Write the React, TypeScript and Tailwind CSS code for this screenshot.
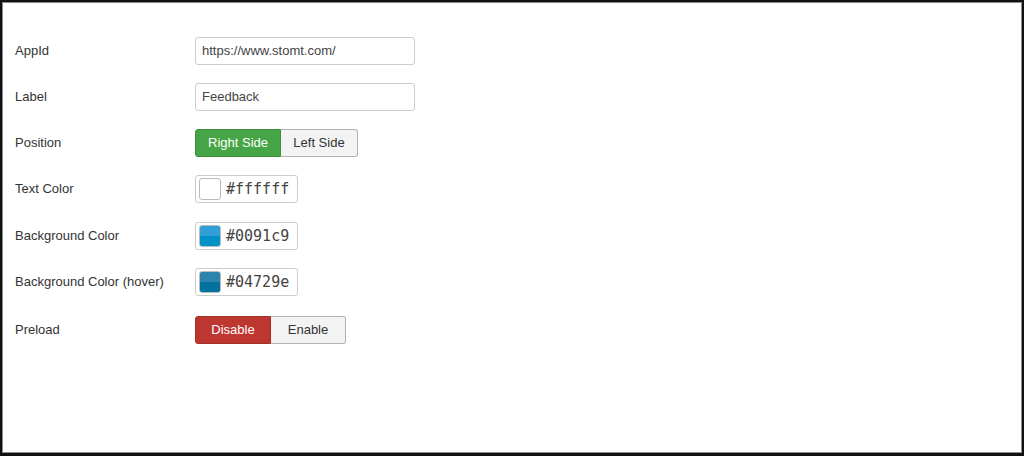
import React from "react";

const sans = { fontFamily: '"Liberation Sans", Arial, sans-serif' };

const Row = ({ label, className = "", children }: { label: string; className?: string; children: React.ReactNode }) => (
  <div className={`flex h-[28px] items-center ${className}`}>
    <div className="w-[180px] text-[13px] text-[#333]">{label}</div>
    <div className="flex">{children}</div>
  </div>
);

const TextInput = ({ value }: { value: string }) => (
  <div className="flex h-[28px] w-[220px] items-center rounded-[3px] border border-[#ccc] bg-white px-[6px] text-[13px] text-[#444]">
    {value}
  </div>
);

const ColorInput = ({ value, top, bottom }: { value: string; top: string; bottom: string }) => (
  <div className="flex h-[28px] w-[103px] items-center gap-[5px] rounded-[3px] border border-[#ccc] bg-white pl-[3px]">
    <div
      className="h-[22px] w-[22px] rounded-[3px] border border-[#bbb]"
      style={{ background: `linear-gradient(${top} 0 50%, ${bottom} 50% 100%)` }}
    />
    <span className="font-['DejaVu_Sans_Mono',monospace] text-[15px] text-[#444]">{value}</span>
  </div>
);

const Toggle = ({
  on,
  off,
  onClass,
  onWidth,
  offWidth,
}: {
  on: string;
  off: string;
  onClass: string;
  onWidth: string;
  offWidth: string;
}) => (
  <div className="flex h-[28px] text-[13px]">
    <div className={`flex items-center justify-center rounded-l-[3px] border text-white ${onClass} ${onWidth}`}>
      {on}
    </div>
    <div
      className={`flex items-center justify-center rounded-r-[3px] border border-l-0 border-[#b3b3b3] bg-[#f3f3f3] text-[#333] ${offWidth}`}
    >
      {off}
    </div>
  </div>
);

export default function App() {
  return (
    <div style={sans} className="h-[456px] w-[1024px] border-2 border-b-[3px] border-[#111] bg-white">
      <div className="h-full border border-[#8a8a8a] pl-[12px] pt-[34px]">
        <div className="flex flex-col gap-[18px]">
          <Row label="AppId">
            <TextInput value="https://www.stomt.com/" />
          </Row>
          <Row label="Label">
            <TextInput value="Feedback" />
          </Row>
          <Row label="Position">
            <Toggle
              on="Right Side"
              off="Left Side"
              onClass="border-[#3d8f3d] bg-[#46a546]"
              onWidth="w-[86px]"
              offWidth="w-[77px]"
            />
          </Row>
          <Row label="Text Color">
            <ColorInput value="#ffffff" top="#ffffff" bottom="#ffffff" />
          </Row>
          <Row label="Background Color" className="mt-[1px]">
            <ColorInput value="#0091c9" top="#2f9fd6" bottom="#0091c9" />
          </Row>
          <Row label="Background Color (hover)">
            <ColorInput value="#04729e" top="#2c83ac" bottom="#04729e" />
          </Row>
          <Row label="Preload" className="mt-[2px]">
            <Toggle
              on="Disable"
              off="Enable"
              onClass="border-[#a3302a] bg-[#bd362f]"
              onWidth="w-[76px]"
              offWidth="w-[75px]"
            />
          </Row>
        </div>
      </div>
    </div>
  );
}
